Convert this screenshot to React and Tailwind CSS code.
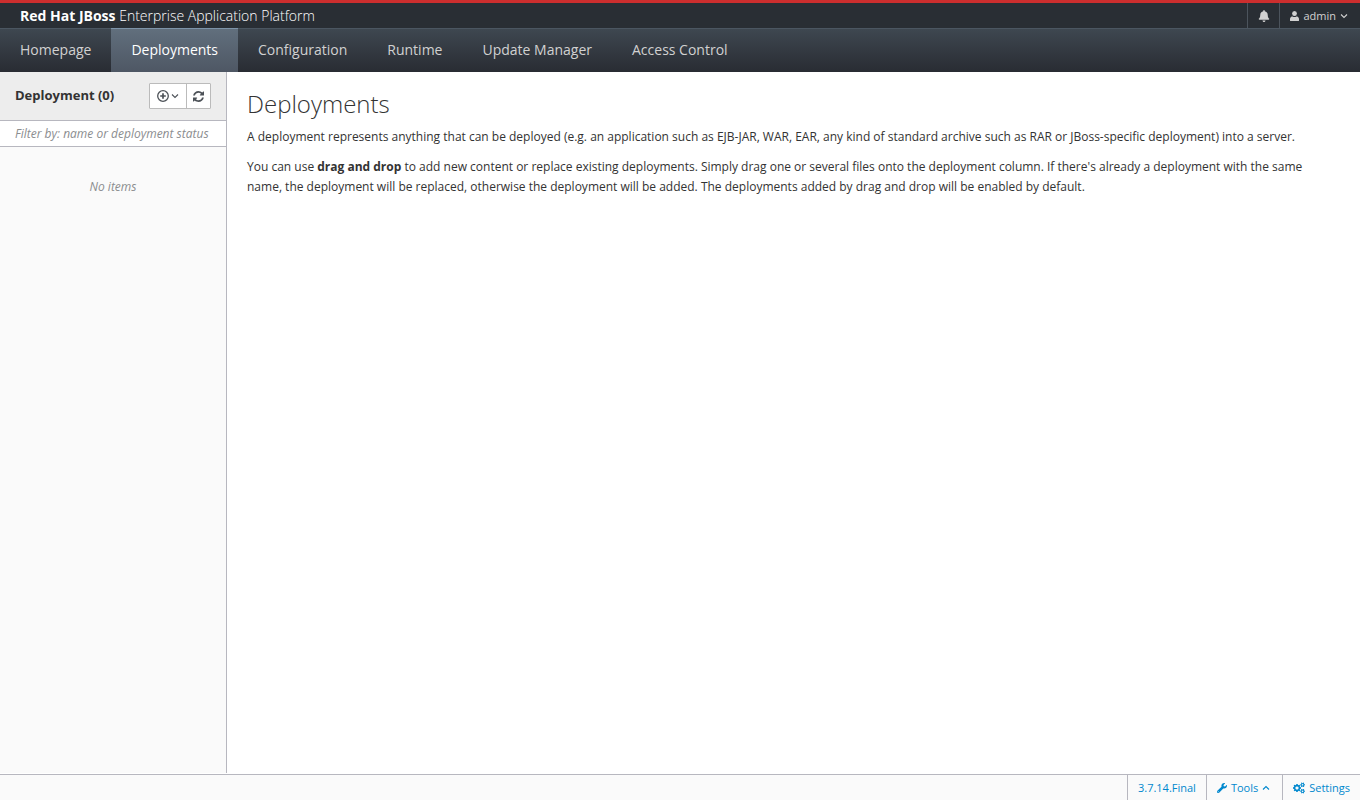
import { FaBell, FaWrench } from "react-icons/fa"

const navItems = [
  "Homepage",
  "Deployments",
  "Configuration",
  "Runtime",
  "Update Manager",
  "Access Control",
]

function UserIcon() {
  return (
    <svg viewBox="0 0 9 10" className="w-[9px] h-[10px]" fill="currentColor" aria-hidden="true">
      <ellipse cx="4.500" cy="2.500" rx="2.400" ry="2.500" />
      <path d="M2 5.400h.6c.5.400 1.100.6 1.900.6s1.400-.2 1.900-.6H7c1.200.3 2 1.300 2 2.600v1.400c0 .3-.3.600-.6.600H.6C.3 10 0 9.700 0 9.400V8c0-1.300.8-2.300 2-2.600z" />
    </svg>
  )
}

function AngleIcon({ up }) {
  return (
    <svg viewBox="0 0 8 8" className="w-2 h-2" fill="none" stroke="currentColor" strokeWidth="1.1" aria-hidden="true">
      <path d={up ? "M1 5.500 4 2.500l3 3" : "M1 2.500l3 3 3-3"} />
    </svg>
  )
}

function AddCircleIcon() {
  return (
    <svg viewBox="0 0 12 12" className="w-3 h-3" fill="none" stroke="currentColor" aria-hidden="true">
      <circle cx="6" cy="6" r="5.300" strokeWidth="1.300" />
      <path d="M6 3.200v5.600M3.200 6h5.600" strokeWidth="1.700" />
    </svg>
  )
}

function RefreshIcon() {
  return (
    <svg viewBox="0 128 1536 1536" className="w-[11px] h-[11px]" fill="currentColor" aria-hidden="true">
      <path d="M1511 1056q0 5-1 7-64 268-268 434.500T764 1664q-146 0-282.500-55T238 1452l-129 129q-19 19-45 19t-45-19-19-45v-448q0-26 19-45t45-19h448q26 0 45 19t19 45-19 45l-137 137q71 66 161 102t187 36q134 0 250-65t186-179q11-17 53-117 8-23 30-23h192q13 0 22.500 9.500t9.500 22.500zm25-800v448q0 26-19 45t-45 19h-448q-26 0-45-19t-19-45 19-45l138-138Q969 384 768 384q-134 0-250 65T332 628q-11 17-53 117-8 23-30 23H50q-13 0-22.500-9.500T18 736v-7q65-268 270-434.500T768 128q146 0 284 55.500T1297 340l130-129q19-19 45-19t45 19 19 45z" />
    </svg>
  )
}

function CogsIcon() {
  return (
    <svg viewBox="0 0 1920 1792" className="w-[12px] h-[12px]" fill="currentColor" aria-hidden="true">
      <path d="M896 896q0-106-75-181t-181-75-181 75-75 181 75 181 181 75 181-75 75-181zm768 512q0-52-38-90t-90-38-90 38-38 90q0 53 37.500 90.500t90.500 37.500 90.500-37.500 37.500-90.500zm0-1024q0-52-38-90t-90-38-90 38-38 90q0 53 37.500 90.500t90.500 37.500 90.500-37.500 37.500-90.500zm-384 421v185q0 10-7 19.500t-16 10.500l-155 24q-11 35-32 76 34 48 90 115 7 11 7 20 0 12-7 19-23 30-82.500 89.500t-78.500 59.500q-11 0-21-7l-115-90q-37 19-77 31-11 108-23 155-7 24-30 24h-186q-11 0-20-7.500t-10-17.500l-23-153q-34-10-75-31l-118 89q-7 7-20 7-11 0-21-8-144-133-144-160 0-9 7-19 10-14 41-53t47-61q-23-44-35-82l-152-24q-10-1-17-9.500t-7-19.500v-185q0-10 7-19.500t16-10.500l155-24q11-35 32-76-34-48-90-115-7-11-7-20 0-12 7-20 22-30 82-89t79-59q11 0 21 7l115 90q34-18 77-32 11-108 23-154 7-24 30-24h186q11 0 20 7.500t10 17.500l23 153q34 10 75 31l118-89q8-7 20-7 11 0 21 8 144 133 144 160 0 8-7 19-12 16-42 54t-45 60q23 48 34 82l152 23q10 2 17 10.500t7 19.500zm640 533v140q0 16-149 31-12 27-30 52 51 113 51 138 0 4-4 7-122 71-124 71-8 0-46-47t-52-68q-20 2-30 2t-30-2q-14 21-52 68t-46 47q-2 0-124-71-4-3-4-7 0-25 51-138-18-25-30-52-149-15-149-31v-140q0-16 149-31 13-29 30-52-51-113-51-138 0-4 4-7 4-2 35-20t59-34 30-16q8 0 46 46.500t52 67.500q20-2 30-2t30 2q51-71 92-112l6-2q4 0 124 70 4 3 4 7 0 25-51 138 17 23 30 52 149 15 149 31zm0-1024v140q0 16-149 31-12 27-30 52 51 113 51 138 0 4-4 7-122 71-124 71-8 0-46-47t-52-68q-20 2-30 2t-30-2q-14 21-52 68t-46 47q-2 0-124-71-4-3-4-7 0-25 51-138-18-25-30-52-149-15-149-31v-140q0-16 149-31 13-29 30-52-51-113-51-138 0-4 4-7 4-2 35-20t59-34 30-16q8 0 46 46.500t52 67.500q20-2 30-2t30 2q51-71 92-112l6-2q4 0 124 70 4 3 4 7 0 25-51 138 17 23 30 52 149 15 149 31z" />
    </svg>
  )
}

function Header() {
  return (
    <header>
      <div className="flex h-7 border-t-3 border-[#cc2e2e] bg-[#292e34] text-[#d1d1d1]">
        <a href="#home" className="flex-1 pl-5 text-sm leading-[26px] font-light text-white">
          <b className="font-bold">Red Hat JBoss</b> Enterprise Application Platform
        </a>
        <button aria-label="Notifications" className="flex w-8 items-center justify-center border-l border-[#4c545d]">
          <FaBell size={12} />
        </button>
        <button className="flex items-center gap-1 border-l border-[#4c545d] pl-2.5 pr-3 text-[11px] leading-4">
          <UserIcon />
          <span className="pt-px">admin</span>
          <AngleIcon />
        </button>
      </div>
      <nav className="flex h-11 bg-linear-to-b from-[#3f4851] to-[#292c33]">
        <ul className="flex flex-1 border-t border-[#4b5661] text-sm">
          {navItems.map(item => (
            <li key={item} className="flex">
              <a
                href="#nav"
                className={
                  item === "Deployments"
                    ? "-mt-px border-t border-[#7d93a8] bg-linear-to-b from-[#616f7d] to-[#4e5764] px-5 leading-[41px] text-white"
                    : "px-5 leading-[41px] text-[#d1d1d1]"
                }
              >
                {item}
              </a>
            </li>
          ))}
        </ul>
      </nav>
    </header>
  )
}

function DeploymentColumn() {
  return (
    <aside className="mb-px flex w-[227px] shrink-0 flex-col border-r border-[#b7b7bf] bg-[#fafafa]">
      <div className="flex h-12 items-center justify-between bg-[#ededed] px-[15px]">
        <h2 className="text-[13px] font-bold">Deployment (0)</h2>
        <div className="flex h-[26px] rounded-[1px] border border-[#bbb] bg-white text-[#4d5258]">
          <button aria-label="Add deployment" className="flex w-9 items-center justify-center gap-0.5">
            <AddCircleIcon />
            <AngleIcon />
          </button>
          <button aria-label="Refresh" className="flex w-6 items-center justify-center border-l border-[#bbb]">
            <RefreshIcon />
          </button>
        </div>
      </div>
      <input
        type="text"
        aria-label="Filter by name or deployment status"
        placeholder="Filter by: name or deployment status"
        className="h-[27px] w-full border-y border-[#b7b7bf] bg-white px-[15px] text-xs italic placeholder:text-[#8b8d8f]"
      />
      <p className="pt-[30px] text-center text-xs leading-5 italic text-[#8b8d8f]">No items</p>
    </aside>
  )
}

function Footer() {
  return (
    <footer className="flex h-[26px] justify-end border-t border-[#b7b7bf] bg-[#fafafa] text-[11px] leading-4 text-[#0088ce]">
      <a href="#version" className="flex items-center border-l border-[#b7b7bf] px-2.5 pt-px">3.7.14.Final</a>
      <button className="flex items-center gap-1 border-l border-[#b7b7bf] pl-2.5 pr-3 pt-px">
        <FaWrench size={10} />
        Tools
        <AngleIcon up />
      </button>
      <a href="#settings" className="flex items-center gap-1 border-l border-[#b7b7bf] px-2.5 pt-px">
        <CogsIcon />
        Settings
      </a>
    </footer>
  )
}

export default function App() {
  return (
    <div className="flex min-h-screen flex-col bg-white font-['Open_Sans',sans-serif] text-xs text-[#333]">
      <Header />
      <div className="flex flex-1">
        <DeploymentColumn />
        <main className="flex-1 px-5 pt-[18px] leading-5">
          <h1 className="mb-[9px] text-2xl leading-7 font-light">Deployments</h1>
          <p className="mb-2.5">
            A deployment represents anything that can be deployed (e.g. an application such as EJB-JAR, WAR, EAR, any
            kind of standard archive such as RAR or JBoss-specific deployment) into a server.
          </p>
          <p>
            You can use <strong className="font-bold">drag and drop</strong> to add new content or replace existing
            deployments. Simply drag one or several files onto the deployment column. If there's already a deployment
            with the same name, the deployment will be replaced, otherwise the deployment will be added. The
            deployments added by drag and drop will be enabled by default.
          </p>
        </main>
      </div>
      <Footer />
    </div>
  )
}
